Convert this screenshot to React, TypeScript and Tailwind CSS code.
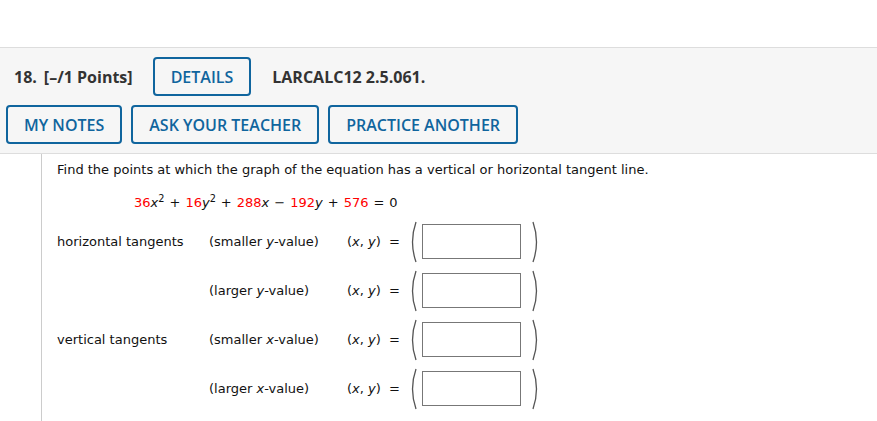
const ROWS = [
  { label: "horizontal tangents", cond: "smaller", v: "y" },
  { label: "", cond: "larger", v: "y" },
  { label: "vertical tangents", cond: "smaller", v: "x" },
  { label: "", cond: "larger", v: "x" },
];

function Paren({ right }: { right?: boolean }) {
  return (
    <svg width="10" height="42" viewBox="0 0 10 42" className="shrink-0">
      <path
        d={right ? "M2 1 Q9 21 2 41" : "M8 1 Q1 21 8 41"}
        fill="none"
        stroke="#555"
        strokeWidth="1.3"
      />
    </svg>
  );
}

function Btn({ children }: { children: string }) {
  return (
    <button
      type="button"
      className="h-[39px] px-[16px] border-2 border-[#10659e] rounded-[4px] text-[#10659e] text-[16px] font-semibold bg-white/0"
    >
      {children}
    </button>
  );
}

function Op({ children }: { children: string }) {
  return <span className="mx-[5px]">{children}</span>;
}

export default function App() {
  return (
    <div className="w-[877px] h-[421px] bg-white overflow-hidden" style={{ fontFamily: "'Open Sans', sans-serif" }}>
      <div className="h-[47px]" />
      <div className="bg-[#f6f6f6] border-t border-b border-[#dddddd] pt-[9px] pb-[9px] pl-[6px]">
        <div className="flex items-center h-[39px]">
          <span className="text-[16px] font-bold text-[#333] ml-[8px]">18.</span>
          <span className="text-[16px] font-bold text-[#333] ml-[7px]">[–/1 Points]</span>
          <div className="ml-[20px]">
            <Btn>DETAILS</Btn>
          </div>
          <span className="text-[16px] font-bold text-[#333] ml-[21px]">LARCALC12 2.5.061.</span>
        </div>
        <div className="flex gap-[9px] mt-[9px]">
          <Btn>MY NOTES</Btn>
          <Btn>ASK YOUR TEACHER</Btn>
          <Btn>PRACTICE ANOTHER</Btn>
        </div>
      </div>
      <div
        className="ml-[41px] border-l border-[#cccccc] pl-[15px] pt-[8px] pb-[20px] text-[13px] text-[#111]"
        style={{ fontFamily: "Verdana, 'DejaVu Sans', sans-serif" }}
      >
        <p className="leading-[16px]">
          Find the points at which the graph of the equation has a vertical or horizontal tangent line.
        </p>
        <p className="mt-[17px] ml-[77px] leading-[16px]">
          <span className="text-[#ff0000]">36</span>
          <i>x</i>
          <sup>2</sup>
          <Op>+</Op>
          <span className="text-[#ff0000]">16</span>
          <i>y</i>
          <sup>2</sup>
          <Op>+</Op>
          <span className="text-[#ff0000]">288</span>
          <i>x</i>
          <Op>−</Op>
          <span className="text-[#ff0000]">192</span>
          <i>y</i>
          <Op>+</Op>
          <span className="text-[#ff0000]">576</span>
          <Op>=</Op>0
        </p>
        <div className="mt-[6px]">
          {ROWS.map((r, i) => (
            <div key={i} className="flex items-center h-[49px]">
              <span className="w-[152px] shrink-0">{r.label}</span>
              <span className="w-[138px] shrink-0">
                ({r.cond} <i>{r.v}</i>-value)
              </span>
              <span className="w-[61px] shrink-0 whitespace-pre">
                (<i>x</i>, <i>y</i>)  =
              </span>
              <div className="flex items-center">
                <Paren />
                <div className="ml-[4px] w-[99px] h-[35px] border border-[#777] bg-white" />
                <div className="ml-[10px]">
                  <Paren right />
                </div>
              </div>
            </div>
          ))}
        </div>
      </div>
    </div>
  );
}
